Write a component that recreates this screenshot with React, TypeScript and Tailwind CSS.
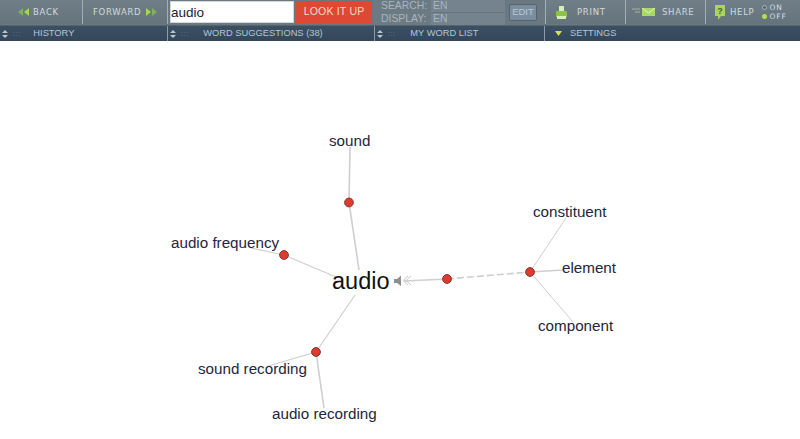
import React from 'react'

const sans = "font-['Liberation_Sans',Arial,sans-serif]"
const wide = "font-['DejaVu_Sans',sans-serif] text-[8.5px] leading-none tracking-[0.7px] text-[#d3dadf]"
const tiny = "font-['DejaVu_Sans',sans-serif] text-[7.5px] leading-none tracking-[0.9px] text-[#d3dadf]"

const labels = [
  { text: 'sound', x: 329, y: 132 },
  { text: 'audio frequency', x: 171, y: 234 },
  { text: 'sound recording', x: 198, y: 360 },
  { text: 'audio recording', x: 272, y: 405 },
  { text: 'constituent', x: 533, y: 203 },
  { text: 'element', x: 562, y: 259 },
  { text: 'component', x: 538, y: 317 },
]

const dots = [
  [349, 202.5],
  [284, 255],
  [316, 352],
  [447, 279],
  [530, 272],
]

function SortIcon() {
  return (
    <span className="flex items-center gap-[5px]">
      <svg width="6" height="8" viewBox="0 0 6 8">
        <path d="M3 0 L6 3 H0 Z M3 8 L0 5 H6 Z" fill="#b9c6d0" />
      </svg>
      <span className="text-[7px] leading-none text-[#6f8295] tracking-[0.5px]">:::</span>
    </span>
  )
}

function ToolButton({ className, children }: { className: string; children: React.ReactNode }) {
  return (
    <div className={`h-[24px] flex items-center bg-gradient-to-b from-[#6f7e87] to-[#65737c] border-r border-[#a3afb6] ${className}`}>
      {children}
    </div>
  )
}

function SectionHead({ className, label, indent, arrow }: { className: string; label: string; indent: string; arrow?: boolean }) {
  return (
    <div className={`h-full flex items-center pl-[2px] border-r border-[#8e9aa6] ${className}`}>
      {arrow ? (
        <svg className="ml-[8px]" width="7" height="5" viewBox="0 0 7 5">
          <path d="M0 0 H7 L3.5 5 Z" fill="#d8e04a" />
        </svg>
      ) : (
        <SortIcon />
      )}
      <span className={`${indent} text-[9.3px] text-[#b6c6d6]`}>{label}</span>
    </div>
  )
}

export default function App() {
  return (
    <div className={`relative w-[800px] h-[439px] overflow-hidden bg-white ${sans}`}>
      {/* Toolbar */}
      <div className="h-[26px] flex items-start bg-[#6a7881] border-b border-[#56646e]">
        <ToolButton className="w-[83px] pl-[18px]">
          <svg width="11" height="8" viewBox="0 0 11 8">
            <path d="M5 0 V8 L0 4 Z" fill="#7fb25a" />
            <path d="M11 0 V8 L6 4 Z" fill="#a6d64e" />
          </svg>
          <span className={`${wide} ml-[4px]`}>BACK</span>
        </ToolButton>
        <ToolButton className="w-[85px] pl-[10px]">
          <span className={wide}>FORWARD</span>
          <svg className="ml-[5px]" width="11" height="8" viewBox="0 0 11 8">
            <path d="M0 0 V8 L5 4 Z" fill="#a6d64e" />
            <path d="M6 0 V8 L11 4 Z" fill="#7fb25a" />
          </svg>
        </ToolButton>
        <input
          readOnly
          value="audio"
          className="ml-[2px] mt-[1px] w-[124px] h-[22px] bg-white border border-[#d5d9dc] px-0 text-[13.5px] text-[#20203a] outline-none"
        />
        <div className="ml-[2px] mt-[1px] w-[76px] h-[22px] flex items-center justify-center bg-[#dd4a34] text-[10.5px] text-[#f5d9cf] tracking-[0.2px]">
          LOOK IT UP
        </div>
        <div className="w-[173px] h-[24px] flex items-center">
          <div className="w-[132px] ml-[1px] pl-[8px] text-[10.4px] leading-[12px] text-[#a9b6bd] bg-[#6c7a83]">
            <div className="flex">
              <span className="w-[50px]">SEARCH:</span>
              <span className="flex-1 pl-[2px] bg-[#74838d] border-b border-[#66747d]">EN</span>
            </div>
            <div className="flex">
              <span className="w-[50px]">DISPLAY:</span>
              <span className="flex-1 pl-[2px] bg-[#74838d]">EN</span>
            </div>
          </div>
          <div className="ml-[4px] w-[28px] h-[17px] flex items-center justify-center rounded-[2px] bg-[#7b8e9f] border border-[#55636c] text-[9.5px] text-[#b9c8d4]">
            EDIT
          </div>
        </div>
        <ToolButton className="w-[81px] border-l pl-[10px]">
          <svg width="11" height="13" viewBox="0 0 11 13">
            <path d="M3 0 H8 V6 H3 Z" fill="#d6efb4" />
            <path d="M0 6 Q0 5 2 5 H9 Q11 5 11 6 V11 H0 Z" fill="#8cc63f" />
            <path d="M1 10 H10 V13 H1 Z" fill="#d6efb4" />
          </svg>
          <span className={`${wide} ml-[10px]`}>PRINT</span>
        </ToolButton>
        <ToolButton className="w-[80px] pl-[6px]">
          <svg width="23" height="10" viewBox="0 0 23 10">
            <path d="M0 2 H8 M3 5 H8" stroke="#a6b2a0" strokeWidth="1" />
            <rect x="10" y="1" width="13" height="8" fill="#a8d868" />
            <path d="M10 1 L16.5 6 L23 1" fill="none" stroke="#e6f4c8" strokeWidth="1" />
          </svg>
          <span className={`${wide} ml-[7px]`}>SHARE</span>
        </ToolButton>
        <div className="flex-1 h-[24px] flex items-center pl-[9px] bg-gradient-to-b from-[#6f7e87] to-[#65737c]">
          <svg width="10" height="15" viewBox="0 0 10 15">
            <path d="M0 0 H10 V11 H6 L3 15 V11 H0 Z" fill="#a9d65a" />
            <text x="5" y="9" textAnchor="middle" fontSize="9" fontWeight="700" fill="#4c5a3a" fontFamily="Liberation Sans">?</text>
          </svg>
          <span className={`${wide} ml-[5px]`}>HELP</span>
          <div className="ml-[8px] flex flex-col gap-[1px]">
            <div className="flex items-center gap-[2px] h-[8px]">
              <span className="w-[5px] h-[5px] rounded-full border border-[#a9b6bd] bg-[#55636c]" />
              <span className={tiny}>ON</span>
            </div>
            <div className="flex items-center gap-[2px] h-[8px]">
              <span className="w-[5px] h-[5px] rounded-full bg-[#b5e04e]" />
              <span className={tiny}>OFF</span>
            </div>
          </div>
        </div>
      </div>

      {/* Section headers */}
      <div className="h-[15px] flex bg-gradient-to-b from-[#3c5064] to-[#33465a]">
        <SectionHead className="w-[168px]" label="HISTORY" indent="ml-[13px]" />
        <SectionHead className="w-[207px]" label="WORD SUGGESTIONS (38)" indent="ml-[15px]" />
        <SectionHead className="w-[170px]" label="MY WORD LIST" indent="ml-[15px]" />
        <SectionHead className="flex-1 border-r-0" label="SETTINGS" indent="ml-[8px]" arrow />
      </div>

      {/* Word graph */}
      <svg className="absolute left-0 top-0" width="800" height="439" viewBox="0 0 800 439">
        <g stroke="#cfcfcf" fill="none">
          <path d="M350 147 L349 202 L359 270" strokeWidth="1.6" />
          <path d="M251 248 L284 255 L336 277" strokeWidth="1.2" />
          <path d="M355 295 L316 352 L268 366" strokeWidth="1.2" />
          <path d="M316 352 L324 408" strokeWidth="1.6" />
          <path d="M404 281 L447 279" strokeWidth="1.4" />
          <path d="M447 279 L530 272" strokeWidth="1.6" strokeDasharray="7 3" />
          <path d="M530 272 L566 218" strokeWidth="1" />
          <path d="M530 272 L563 270" strokeWidth="1.4" />
          <path d="M530 272 L573 322" strokeWidth="1" />
        </g>
        <path d="M394 279 H397 L401 275.5 V286 L397 283 H394 Z" fill="#8f8f8f" />
        <path d="M408 276 L403 280.5 L408 285 M411 276 L406 280.5 L411 285" fill="none" stroke="#c8c8c8" strokeWidth="1" />
        {dots.map(([cx, cy]) => (
          <circle key={`${cx}-${cy}`} cx={cx} cy={cy} r="4.4" fill="#e03a2c" stroke="#7a3a34" strokeWidth="1" />
        ))}
      </svg>
      {labels.map((l) => (
        <div
          key={l.text}
          className="absolute text-[15.2px] leading-[18px] whitespace-nowrap text-[#25253c]"
          style={{ left: l.x, top: l.y }}
        >
          {l.text}
        </div>
      ))}
      <div className="absolute left-[332px] top-[267px] text-[23.5px] leading-[28px] text-[#111111]">audio</div>
    </div>
  )
}
